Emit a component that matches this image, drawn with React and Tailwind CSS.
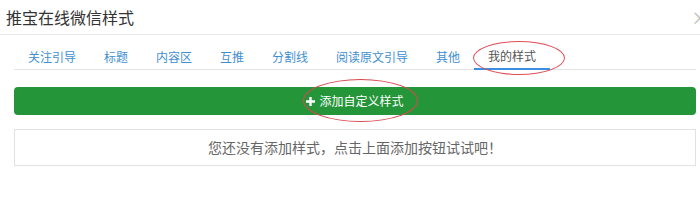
export default function App() {
  const tabs = ["关注引导", "标题", "内容区", "互推", "分割线", "阅读原文引导", "其他", "我的样式"];
  const active = "我的样式";

  return (
    <div
      className="w-[700px] h-[208px] bg-white overflow-hidden"
      style={{ fontFamily: '"Noto Sans CJK SC", "Noto Sans", sans-serif' }}
    >
      {/* header */}
      <div className="h-[35px] flex items-center justify-between pl-[6px] border-b border-[#e8e8e8]">
        <span className="text-[16px] text-[#333]">推宝在线微信样式</span>
        <span className="text-[18px] leading-none text-[#bbb] mr-[-9px]">×</span>
      </div>

      <div className="px-[14px] pr-[4px]">
        {/* tabs */}
        <div className="mt-[9px] h-[26px] flex border-b border-[#e3e3e3]">
          {tabs.map((t) =>
            t === active ? (
              <div key={t} className="relative h-[26px] flex items-center px-[14px] border-b-2 border-[#3a8ee6] text-[12px] text-[#555]">
                {t}
                <span className="absolute left-[-1px] top-[-3px] w-[92px] h-[34px] rounded-[50%] border border-[#e0505a] pointer-events-none" />
              </div>
            ) : (
              <div key={t} className="h-[26px] flex items-center px-[14px] text-[12px] text-[#3f8fd2]">
                {t}
              </div>
            )
          )}
        </div>

        {/* add button */}
        <div className="relative mt-[17px] h-[28px] rounded-[4px] bg-[#25953a] flex items-center justify-center gap-[4px] text-white text-[12px]">
          <svg width="9" height="9" viewBox="0 0 9 9" className="mt-[1px]">
            <path d="M3.3 0h2.4v3.3H9v2.4H5.7V9H3.3V5.7H0V3.3h3.3z" fill="#fff" />
          </svg>
          <span>添加自定义样式</span>
          <span className="absolute left-[289px] top-[-8px] w-[115px] h-[43px] rounded-[50%] border border-[#d9474f] pointer-events-none" />
        </div>

        {/* empty state */}
        <div className="mt-[14px] h-[37px] border border-[#e2e2e2] flex items-center justify-center text-[14px] text-[#666]">
          您还没有添加样式，点击上面添加按钮试试吧！
        </div>
      </div>
    </div>
  );
}
